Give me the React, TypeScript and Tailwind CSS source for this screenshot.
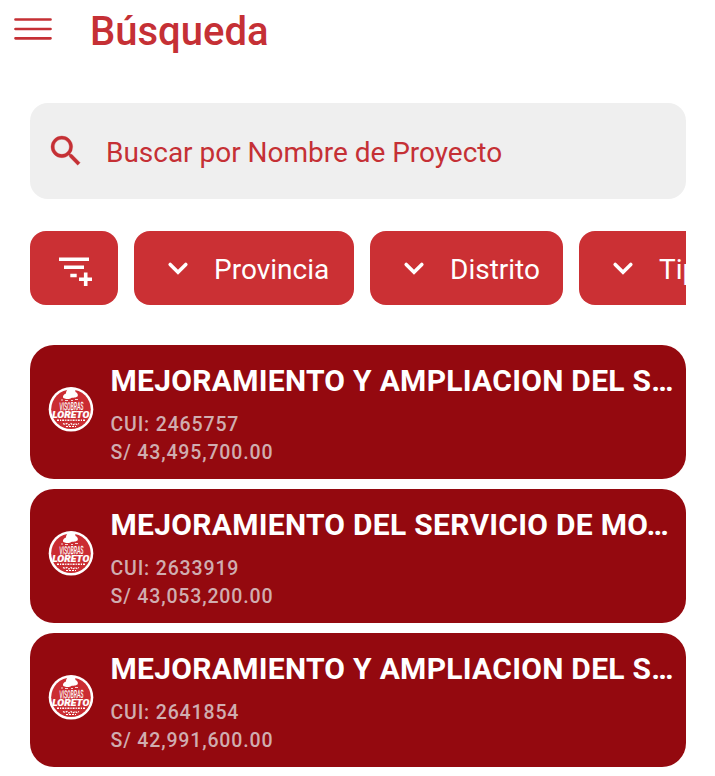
const projects = [
  { title: 'MEJORAMIENTO Y AMPLIACION DEL S…', cui: '2465757', amount: '43,495,700.00' },
  { title: 'MEJORAMIENTO DEL SERVICIO DE MO…', cui: '2633919', amount: '43,053,200.00' },
  { title: 'MEJORAMIENTO Y AMPLIACION DEL S…', cui: '2641854', amount: '42,991,600.00' },
];

const filters = [
  { label: 'Provincia', width: 'w-[220px]' },
  { label: 'Distrito', width: 'w-[193px]' },
  { label: 'Tipo', width: 'w-[160px]' },
];

function Logo() {
  return (
    <svg className="h-[46px] w-[46px] shrink-0" viewBox="0 0 46 46">
      <circle cx="23" cy="23.300" r="22.300" fill="#fff" />
      <circle cx="23" cy="23.300" r="19.800" fill="#cb2c32" />
      <path d="M15 11.500c-.5-2 1.500-3.500 3-4c0-3 2-5.500 5-5.500c3-1 4.500 1 4.500 4c2 .5 3 3 2 4.500c-3 2-5 .5-7 2c-3 1-6 .5-7.500-1z" fill="#fff" />
      <path d="M13 14h2m2 .5h3m3 0h2m2-1h3" stroke="#fff" strokeWidth=".8" />
      <text x="11.500" y="24.300" textLength="24" lengthAdjust="spacingAndGlyphs" transform="rotate(-2 23 23)" fill="#fff" fontFamily="Roboto, sans-serif" fontSize="11.500" fontWeight="500" fontStyle="italic">VISOBRAS</text>
      <text x="4.300" y="32" textLength="37" lengthAdjust="spacingAndGlyphs" fill="#fff" stroke="#fff" strokeWidth=".2" fontFamily="Roboto, sans-serif" fontSize="9.800" fontWeight="900" fontStyle="italic">LORETO</text>
      <path d="M9 34.300h28" stroke="#fff" strokeWidth="1.500" strokeDasharray="2 1 1.200 1" />
      <path d="M15 37.500l2 1 2-1 2 1.500 2-1.500 2 1.500 2-1.500 2 1 2-1M18 40.500h10" fill="none" stroke="#fff" strokeWidth="1.200" strokeDasharray="2 1" />
    </svg>
  );
}

export default function App() {
  return (
    <div className="h-[776px] w-[715px] overflow-hidden bg-white font-['Roboto',sans-serif]">
      <header className="flex h-[103px] items-start pl-[14px] text-[#c53035]">
        <svg className="mt-[16px] h-[26px] w-[38px] shrink-0" viewBox="0 0 38 26" fill="none" stroke="currentColor" strokeWidth="2.700" strokeLinecap="round">
          <path d="M1.500 3.500h35M1.500 13h35M1.500 22.300h35" />
        </svg>
        <h1 className="ml-[38px] mt-[8px] text-[40px] leading-[48px] font-medium">Búsqueda</h1>
      </header>
      <main className="ml-[30px] w-[656px]">
        <div className="flex h-[96px] items-center rounded-[18px] bg-[#efefef] pl-[16px] text-[#c53035]">
          <svg className="mb-[1px] h-10 w-10 shrink-0" viewBox="0 0 24 24" fill="currentColor" stroke="currentColor" strokeWidth=".2">
            <path d="M15.500 14h-.79l-.28-.27A6.471 6.471 0 0 0 16 9.500 6.500 6.500 0 1 0 9.500 16c1.610 0 3.090-.59 4.230-1.570l.27.28v.79l5 4.990L20.490 19l-4.990-5zm-6 0C7.010 14 5 11.990 5 9.500S7.010 5 9.500 5 14 7.010 14 9.500 11.990 14 9.500 14z" />
          </svg>
          <span className="ml-[20px] mt-[3px] whitespace-nowrap text-[28px] leading-8 tracking-[-0.02px]">Buscar por Nombre de Proyecto</span>
        </div>
        <div className="mt-8 flex gap-4 overflow-hidden text-white">
          <button className="flex h-[74px] w-[88px] shrink-0 items-center justify-center rounded-[16px] bg-[#cb3034]">
            <svg className="mt-[5px] h-8 w-[36px]" viewBox="0 0 36 32" fill="none" stroke="currentColor" strokeWidth="3.600">
              <path d="M3 4.200h30M8 12.300h20M14.300 20.500h6.400M23 24.200h13.500M29.700 17.500v13.500" />
            </svg>
          </button>
          {filters.map((f) => (
            <button key={f.label} className={`flex h-[74px] shrink-0 items-center rounded-[16px] bg-[#cb3034] pl-[33px] ${f.width}`}>
              <svg className="h-[16px] w-[22px] shrink-0" viewBox="0 0 22 16" fill="none" stroke="currentColor" strokeWidth="3.600" strokeLinecap="round">
                <path d="M3.200 4.400l7.800 7.800 7.800-7.800" />
              </svg>
              <span className="ml-[25px] mt-[3px] text-[28px] leading-8">{f.label}</span>
            </button>
          ))}
        </div>
        <div className="mt-10 flex flex-col gap-[10px]">
          {projects.map((p) => (
            <article key={p.cui} className="flex h-[134px] items-start rounded-[24px] bg-[#94090f] pl-[18px]">
              <div className="mt-[41px]">
                <Logo />
              </div>
              <div className="ml-[16.500px] mt-[18px] whitespace-nowrap">
                <h2 className="text-[30px] leading-9 font-bold tracking-[0.28px] text-white">{p.title}</h2>
                <div className="mt-[12px] text-[19.500px] leading-7 font-medium tracking-[0.85px] text-[#d0adb0]">
                  <p>CUI: {p.cui}</p>
                  <p>S/ {p.amount}</p>
                </div>
              </div>
            </article>
          ))}
        </div>
      </main>
    </div>
  );
}
